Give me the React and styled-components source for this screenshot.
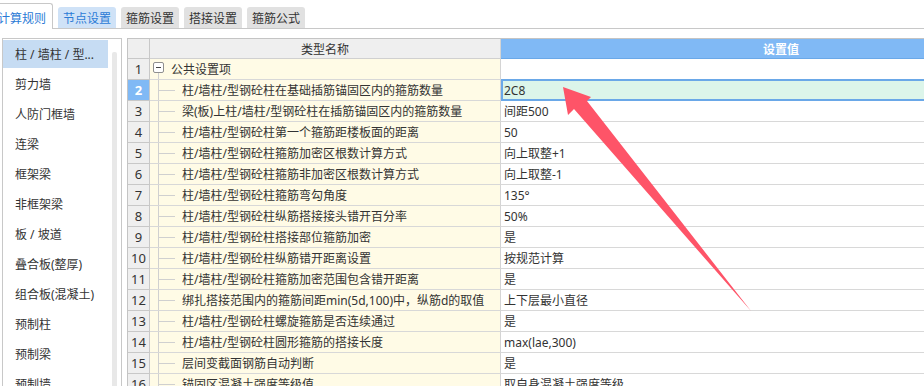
import React from 'react'
import styled, { createGlobalStyle } from 'styled-components'

const GlobalStyle = createGlobalStyle`
  html, body {
    margin: 0;
    padding: 0;
    background: #fff;
  }
  body {
    font-family: "Noto Sans", "Noto Sans CJK SC", sans-serif;
    font-size: 12px;
    color: #333;
  }
`

const Page = styled.div`
  position: relative;
  width: 924px;
  height: 386px;
  overflow: hidden;
`

const TabBar = styled.div`
  display: flex;
  align-items: flex-end;
  gap: 5px;
  height: 28px;
  border-bottom: 1px solid #c8c8c8;
`

const tabLook = {
  active: 'background: #fff; color: #2b7bd6; border: 1px solid #c8c8c8; border-bottom: none; height: 26px; margin-bottom: -1px; padding-top: 2px;',
  blue: 'background: #cfe2f7; color: #2b7bd6; height: 21px;',
  gray: 'background: #e1e1e1; color: #333; height: 21px;',
}

const Tab = styled.div`
  flex: none;
  box-sizing: border-box;
  display: flex;
  align-items: center;
  justify-content: center;
  padding: 0 5px;
  border-radius: 3px 3px 0 0;
  font-size: 12px;
  white-space: nowrap;
  ${p => tabLook[p.$look]}
  &:first-child {
    margin-left: -9px;
    width: 62px;
  }
`

const Body = styled.div`
  display: flex;
  align-items: flex-start;
  gap: 5px;
  padding: 9px 0 0 2px;
`

const SidePanel = styled.div`
  flex: none;
  box-sizing: border-box;
  display: flex;
  gap: 4px;
  width: 120px;
  height: 380px;
  padding-top: 1px;
  border: 1px solid #c8c8c8;
`

const ItemList = styled.div`
  display: flex;
  flex-direction: column;
  gap: 2px;
  width: 105px;
`

const SideItem = styled.div`
  display: flex;
  align-items: center;
  height: 28px;
  padding-left: 12px;
  white-space: nowrap;
  background: ${p => (p.$selected ? '#c6dcf3' : 'transparent')};
`

const ScrollTrack = styled.div`
  width: 5px;
  height: 400px;
  margin-top: 12px;
  border-radius: 2px;
  background: #e8e8e8;
`

const Grid = styled.div`
  flex: none;
  border-top: 1px solid #c4c4c4;
  border-left: 1px solid #c4c4c4;
`

const Row = styled.div`
  display: flex;
  height: ${p => (p.$header ? 20 : 21)}px;
`

const NumCell = styled.div`
  flex: none;
  box-sizing: border-box;
  width: 22px;
  display: flex;
  align-items: center;
  justify-content: center;
  border-right: 1px solid #c8c8c8;
  border-bottom: 1px solid #c8c8c8;
  font-size: 13px;
  background: ${p => (p.$selected ? '#80b9f5' : '#efefef')};
  color: ${p => (p.$selected ? '#fff' : '#333')};
  font-weight: ${p => (p.$selected ? 700 : 400)};
`

const NameCell = styled.div`
  flex: none;
  box-sizing: border-box;
  width: 351px;
  display: flex;
  align-items: center;
  padding-left: 3px;
  border-right: 1px solid #d4d4d4;
  border-bottom: 1px solid #d8d8d8;
  background: #fffbe6;
  white-space: nowrap;
`

const ValueCell = styled.div`
  flex: none;
  position: relative;
  box-sizing: border-box;
  width: 560px;
  display: flex;
  align-items: center;
  padding-left: 3px;
  border-bottom: 1px solid #d8d8d8;
  background: ${p => (p.$selected ? '#dcf5ea' : '#fff')};
  white-space: nowrap;
  ${p =>
    p.$selected &&
    `&::after {
      content: '';
      position: absolute;
      top: -1px;
      bottom: -1px;
      left: 0;
      right: 0;
      border: 2px solid #6aa8e8;
    }`}
`

const HeadName = styled(NameCell)`
  justify-content: center;
  padding-left: 0;
  background: #efefef;
  border-bottom-color: #d0d0d0;
`

const HeadValue = styled(ValueCell)`
  justify-content: center;
  padding-left: 0;
  background: #80b9f5;
  border-bottom: 1px solid #6aa8e8;
  color: #fff;
  font-weight: 700;
`

const TreeRoot = styled.div`
  align-self: stretch;
  width: 11px;
  background: linear-gradient(#d0d0d0, #d0d0d0) 5px 100% / 1px 50% no-repeat;
`

const Expander = styled.div`
  box-sizing: border-box;
  width: 11px;
  height: 11px;
  margin-top: 3px;
  border: 1px solid #8f8f8f;
  border-radius: 2px;
  background: linear-gradient(#444, #444) center / 5px 1px no-repeat, #fff;
`

const TreeGuide = styled.div`
  flex: none;
  align-self: stretch;
  width: 24px;
  margin-left: 5px;
  background:
    linear-gradient(#d0d0d0, #d0d0d0) 0 0 / 1px 100% no-repeat,
    linear-gradient(#d0d0d0, #d0d0d0) 0 50% / 17px 1px no-repeat;
`

const GroupLabel = styled.span`
  margin-left: 7px;
`

const Arrow = styled.svg`
  position: absolute;
  left: 0;
  top: 0;
  pointer-events: none;
`

const tabs = [
  ['计算规则', 'active'],
  ['节点设置', 'blue'],
  ['箍筋设置', 'gray'],
  ['搭接设置', 'gray'],
  ['箍筋公式', 'gray'],
]

const sideItems = [
  '柱 / 墙柱 / 型...',
  '剪力墙',
  '人防门框墙',
  '连梁',
  '框架梁',
  '非框架梁',
  '板 / 坡道',
  '叠合板(整厚)',
  '组合板(混凝土)',
  '预制柱',
  '预制梁',
  '预制墙',
]

const rows = [
  ['柱/墙柱/型钢砼柱在基础插筋锚固区内的箍筋数量', '2C8'],
  ['梁(板)上柱/墙柱/型钢砼柱在插筋锚固区内的箍筋数量', '间距500'],
  ['柱/墙柱/型钢砼柱第一个箍筋距楼板面的距离', '50'],
  ['柱/墙柱/型钢砼柱箍筋加密区根数计算方式', '向上取整+1'],
  ['柱/墙柱/型钢砼柱箍筋非加密区根数计算方式', '向上取整-1'],
  ['柱/墙柱/型钢砼柱箍筋弯勾角度', '135°'],
  ['柱/墙柱/型钢砼柱纵筋搭接接头错开百分率', '50%'],
  ['柱/墙柱/型钢砼柱搭接部位箍筋加密', '是'],
  ['柱/墙柱/型钢砼柱纵筋错开距离设置', '按规范计算'],
  ['柱/墙柱/型钢砼柱箍筋加密范围包含错开距离', '是'],
  ['绑扎搭接范围内的箍筋间距min(5d,100)中，纵筋d的取值', '上下层最小直径'],
  ['柱/墙柱/型钢砼柱螺旋箍筋是否连续通过', '是'],
  ['柱/墙柱/型钢砼柱圆形箍筋的搭接长度', 'max(lae,300)'],
  ['层间变截面钢筋自动判断', '是'],
  ['锚固区混凝土强度等级值', '取自身混凝土强度等级'],
]

export default function App() {
  return (
    <Page>
      <GlobalStyle />
      <TabBar>
        {tabs.map(([label, look]) => (
          <Tab key={label} $look={look}>
            {label}
          </Tab>
        ))}
      </TabBar>
      <Body>
        <SidePanel>
          <ItemList>
            {sideItems.map((name, i) => (
              <SideItem key={name} $selected={i === 0}>
                {name}
              </SideItem>
            ))}
          </ItemList>
          <ScrollTrack />
        </SidePanel>
        <Grid>
          <Row $header>
            <NumCell />
            <HeadName>类型名称</HeadName>
            <HeadValue>设置值</HeadValue>
          </Row>
          <Row>
            <NumCell>1</NumCell>
            <NameCell>
              <TreeRoot>
                <Expander />
              </TreeRoot>
              <GroupLabel>公共设置项</GroupLabel>
            </NameCell>
            <ValueCell />
          </Row>
          {rows.map(([name, value], i) => (
            <Row key={i}>
              <NumCell $selected={i === 0}>{i + 2}</NumCell>
              <NameCell>
                <TreeGuide />
                {name}
              </NameCell>
              <ValueCell $selected={i === 0}>{value}</ValueCell>
            </Row>
          ))}
        </Grid>
      </Body>
      <Arrow width="924" height="386" viewBox="0 0 924 386">
        <polygon
          points="563,87 591,97 587,101 751,311 574,109 568,115"
          fill="#fe5468"
        />
      </Arrow>
    </Page>
  )
}
